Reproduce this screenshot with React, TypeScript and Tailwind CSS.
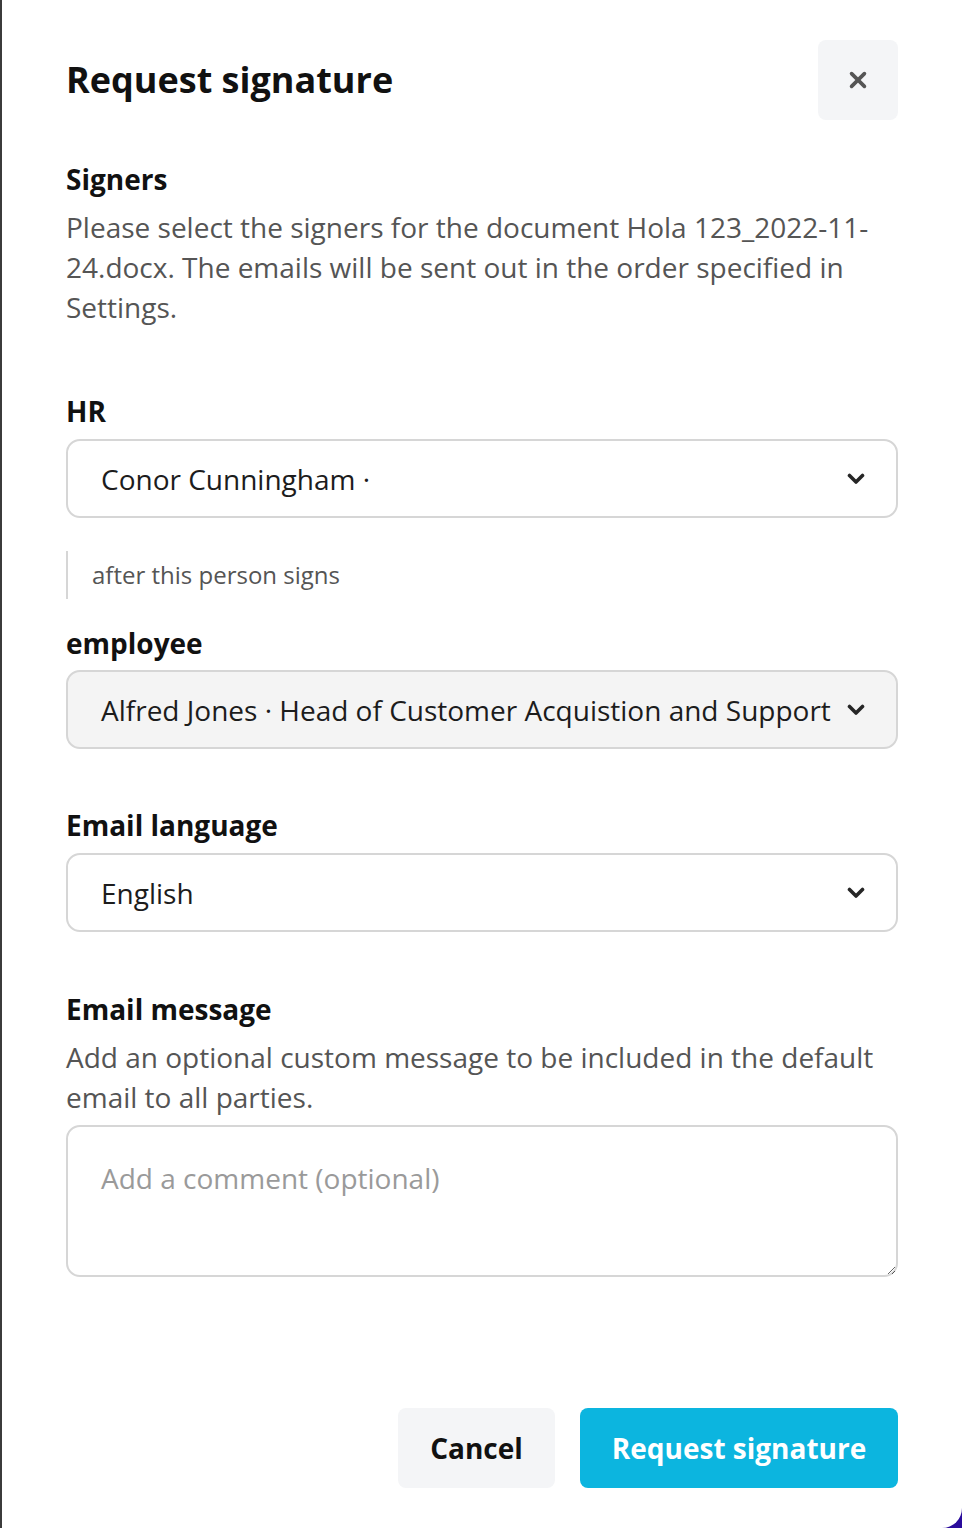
import React, { useState } from "react";

const Chevron = () => (
  <svg width="18" height="12" viewBox="0 0 18 12" fill="none" stroke="#262626" strokeWidth="3.6" strokeLinecap="round" strokeLinejoin="round">
    <path d="M2.5 2.5l6.5 6.5 6.5-6.5" />
  </svg>
);

const SelectBox = ({ value, muted }: { value: string; muted?: boolean }) => (
  <div
    className={`flex items-center justify-between h-[79px] rounded-[14px] border-2 border-[#d6d6d6] pl-[33px] pr-[31px] ${
      muted ? "bg-[#f4f4f4]" : "bg-white"
    }`}
  >
    <span className="text-[28px] text-[#1c1c1c]">{value}</span>
    <Chevron />
  </div>
);

const RequestSignature = () => {
  const [comment, setComment] = useState("");

  return (
    <div
      className="min-h-[1528px] bg-[#2a0c9c] flex"
      style={{ fontFamily: '"Open Sans", "Noto Sans", sans-serif' }}
    >
      <div className="w-[2px] bg-[#3b3b3b]" />
      <div className="flex-1 bg-white rounded-br-[20px] flex flex-col pl-[64px] pr-[64px] pt-[40px] pb-[40px]">
        <div className="flex items-start justify-between">
          <h1 className="mt-[13px] text-[36px] font-bold text-[#111]">Request signature</h1>
          <button className="w-[80px] h-[80px] rounded-[8px] bg-[#f4f5f7] flex items-center justify-center">
            <svg width="22" height="22" viewBox="0 0 24 24" fill="none" stroke="#555" strokeWidth="4" strokeLinecap="round">
              <path d="M5 5l14 14M19 5L5 19" />
            </svg>
          </button>
        </div>

        <h2 className="mt-[38px] text-[28px] font-bold text-[#111]">Signers</h2>
        <p className="mt-[7px] text-[28px] leading-[40px] text-[#555]">
          Please select the signers for the document Hola 123_2022-11-24.docx. The emails will be sent out in the order specified in Settings.
        </p>

        <h3 className="mt-[63px] text-[28px] font-bold text-[#111]">HR</h3>
        <div className="mt-[7px]">
          <SelectBox value="Conor Cunningham ·" />
        </div>
        <div className="mt-[33px] border-l-2 border-[#d6d6d6] pl-[24px] h-[48px] flex items-center">
          <span className="text-[24px] text-[#555]">after this person signs</span>
        </div>

        <h3 className="mt-[23px] text-[28px] font-bold text-[#111]">employee</h3>
        <div className="mt-[6px]">
          <SelectBox value="Alfred Jones · Head of Customer Acquistion and Support" muted />
        </div>

        <h3 className="mt-[55px] text-[28px] font-bold text-[#111]">Email language</h3>
        <div className="mt-[7px]">
          <SelectBox value="English" />
        </div>

        <h3 className="mt-[56px] text-[28px] font-bold text-[#111]">Email message</h3>
        <p className="mt-[7px] text-[28px] leading-[40px] text-[#555]">
          Add an optional custom message to be included in the default email to all parties.
        </p>
        <textarea
          value={comment}
          onChange={(e) => setComment(e.target.value)}
          placeholder="Add a comment (optional)"
          className="mt-[8px] h-[152px] rounded-[14px] border-2 border-[#d6d6d6] px-[33px] py-[30px] text-[28px] text-[#1c1c1c] placeholder:text-[#9a9a9a] outline-none"
        />

        <div className="mt-auto flex justify-end gap-[25px]">
          <button className="h-[80px] w-[157px] rounded-[8px] bg-[#f4f5f7] text-[28px] font-bold text-[#111]">
            Cancel
          </button>
          <button className="h-[80px] w-[318px] rounded-[8px] bg-[#0cb5df] text-[28px] font-bold text-white">
            Request signature
          </button>
        </div>
      </div>
    </div>
  );
};

export default function App() {
  return <RequestSignature />;
}
